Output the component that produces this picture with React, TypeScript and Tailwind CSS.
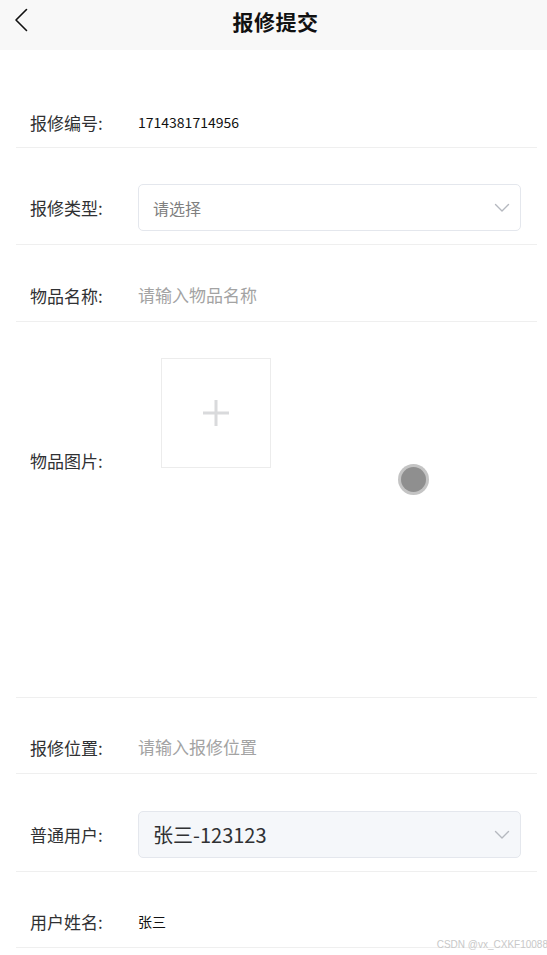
import React from 'react';

const font = { fontFamily: '"Noto Sans CJK SC", "Microsoft YaHei", sans-serif' };

function Chevron() {
  return (
    <svg width="16" height="10" viewBox="0 0 16 10" fill="none">
      <path d="M1.5 1.5 L8 8 L14.5 1.5" stroke="#b5b8bf" strokeWidth="1.4" strokeLinecap="round" strokeLinejoin="round" />
    </svg>
  );
}

function Row({ children, className = '' }: { children: React.ReactNode; className?: string }) {
  return (
    <div className={`flex items-center ml-4 mr-[10px] pl-[14px] pr-[16px] border-b border-[#efefef] ${className}`}>
      {children}
    </div>
  );
}

function Label({ children, className = '' }: { children: React.ReactNode; className?: string }) {
  return <div className={`w-[108px] shrink-0 text-[17px] leading-[23px] text-[#303133] ${className}`}>{children}</div>;
}

export default function App() {
  return (
    <div className="relative w-[547px] h-[955px] bg-white overflow-hidden" style={font}>
      {/* header */}
      <div className="h-[50px] bg-[#f8f8f8] flex items-center justify-center relative">
        <svg className="absolute left-[13px] top-[8px]" width="16" height="24" viewBox="0 0 16 24" fill="none">
          <path d="M13.5 1.5 L3 12 L13.5 22.5" stroke="#111" strokeWidth="1.6" strokeLinecap="round" strokeLinejoin="round" />
        </svg>
        <div className="text-[21px] font-bold text-[#111] tracking-[0.5px] -mt-[6px] ml-[4px]">报修提交</div>
      </div>

      <div className="pt-[48px]">
        <Row className="py-[13px]">
          <Label>报修编号:</Label>
          <div className="text-[14px] leading-[23px] text-[#111]">1714381714956</div>
        </Row>

        <Row className="mt-[23px] py-[13px]">
          <Label>报修类型:</Label>
          <div className="flex-1 h-[47px] rounded-[5px] border border-[#e4e7ed] bg-white flex items-center justify-between pl-[14px] pr-[10px]">
            <span className="text-[16px] text-[#808080]">请选择</span>
            <Chevron />
          </div>
        </Row>

        <Row className="mt-[24px] py-[13px]">
          <Label>物品名称:</Label>
          <div className="text-[17px] leading-[26px] text-[#a3a3a3]">请输入物品名称</div>
        </Row>

        <Row className="mt-[23px] pt-[13px] pb-[13px] !items-start h-[353px]">
          <Label className="mt-[91px]">物品图片:</Label>
          <div className="ml-[23px] w-[110px] h-[110px] border border-[#ececec] flex items-center justify-center">
            <svg width="26" height="26" viewBox="0 0 26 26">
              <rect x="11.5" y="0" width="3" height="26" fill="#d9dadc" />
              <rect x="0" y="11.5" width="26" height="3" fill="#d9dadc" />
            </svg>
          </div>
        </Row>

        <Row className="mt-[23px] py-[13px]">
          <Label>报修位置:</Label>
          <div className="text-[17px] leading-[26px] text-[#a3a3a3]">请输入报修位置</div>
        </Row>

        <Row className="mt-[24px] py-[13px]">
          <Label>普通用户:</Label>
          <div className="flex-1 h-[47px] rounded-[5px] border border-[#e4e7ed] bg-[#f5f7fa] flex items-center justify-between pl-[14px] pr-[10px]">
            <span className="text-[20px] text-[#303133]">张三-123123</span>
            <Chevron />
          </div>
        </Row>

        <Row className="mt-[23px] py-[13px]">
          <Label>用户姓名:</Label>
          <div className="text-[14px] leading-[26px] text-[#111]">张三</div>
        </Row>
      </div>

      {/* floating ball */}
      <div className="absolute left-[398px] top-[464px] w-[31px] h-[31px] rounded-full bg-[#c4c4c4] flex items-center justify-center">
        <div className="w-[25px] h-[25px] rounded-full bg-[#8f8f8f]" />
      </div>

      {/* watermark */}
      <div className="absolute right-[-1px] top-[937px] text-[10px] text-[#c8c8c8]" style={{ fontFamily: '"Liberation Sans", Arial, sans-serif' }}>
        CSDN @vx_CXKF10088
      </div>
    </div>
  );
}
